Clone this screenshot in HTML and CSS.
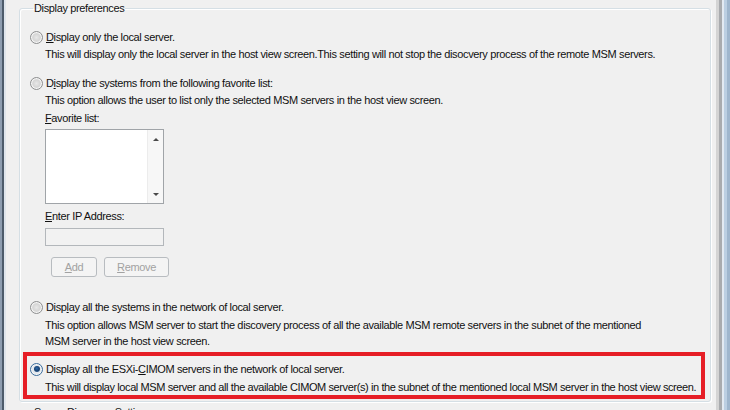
FILE: index.html
```html
<!DOCTYPE html>
<html>
<head>
<meta charset="utf-8">
<link rel="stylesheet" href="styles.css">
</head>
<body>
<div class="window">
  <div class="frame-left"><span class="fl1"></span><span class="fl2"></span><span class="fl3"></span></div>
  <div class="main">
    <fieldset class="group">
      <legend class="group-title">Display preferences</legend>

      <div class="opt opt-1"><span class="radio"></span><span class="opt-text"><u>D</u>isplay only the local server.</span></div>
      <div class="desc desc-1">This will display only the local server in the host view screen.This setting will not stop the disocvery process of the remote MSM servers.</div>

      <div class="opt opt-2"><span class="radio"></span><span class="opt-text">D<u>i</u>splay the systems from the following favorite list:</span></div>
      <div class="desc desc-2">This option allows the user to list only the selected MSM servers in the host view screen.</div>

      <div class="sub">
        <div class="field-label fav-label"><u>F</u>avorite list:</div>
        <div class="listbox">
          <div class="list-area"></div>
          <div class="vscroll"><span class="arrow-up"></span><span class="arrow-down"></span></div>
        </div>
        <div class="field-label ip-label"><u>E</u>nter IP Address:</div>
        <div class="textbox"></div>
        <div class="buttons">
          <div class="btn btn-add"><u>A</u>dd</div>
          <div class="btn btn-remove"><u>R</u>emove</div>
        </div>
      </div>

      <div class="opt opt-3"><span class="radio"></span><span class="opt-text">Disp<u>l</u>ay all the systems in the network of local server.</span></div>
      <div class="desc desc-3">This option allows MSM server to start the discovery process of all the available MSM remote servers in the subnet of the mentioned<br>MSM server in the host view screen.</div>

      <div class="highlight">
        <div class="opt opt-4"><span class="radio checked"></span><span class="opt-text">Display all the ESXi-<u>C</u>IMOM servers in the network of local server.</span></div>
        <div class="desc desc-4">This will display local MSM server and all the available CIMOM server(s) in the subnet of the mentioned local MSM server in the host view screen.</div>
      </div>
    </fieldset>

    <fieldset class="group group-2">
      <legend class="group-title">Server Discovery Settings</legend>
    </fieldset>
  </div>
  <div class="frame-right"><span class="fr1"></span><span class="fr2"></span><span class="fr3"></span><span class="fr4"></span><span class="fr5"></span></div>
</div>
</body>
</html>
```

FILE: styles.css
```css
html, body {
  margin: 0;
  padding: 0;
  width: 730px;
  height: 410px;
  overflow: hidden;
  background: #f0f0f0;
}

.window {
  display: flex;
  width: 730px;
  height: 410px;
  font-family: "Liberation Sans", Arial, sans-serif;
  font-size: 11px;
  letter-spacing: -0.36px;
  color: #111111;
}

.frame-left {
  display: flex;
  width: 6px;
  flex: none;
}
.frame-left span { display: block; height: 100%; }
.fl1 { width: 2px; background: #8e9db0; }
.fl2 { width: 2px; background: #4d5b6b; }
.fl3 { width: 2px; background: #dfe5ec; }

.frame-right {
  display: flex;
  width: 14px;
  flex: none;
}
.frame-right span { display: block; height: 100%; }
.fr1 { width: 3px; background: #d4d4d4; }
.fr2 { width: 3px; background: #a9abae; }
.fr3 { width: 2px; background: #e3eaf2; }
.fr4 { width: 3px; background: #bccfe2; }
.fr5 { width: 3px; background: #9fb6cd; }

.main {
  flex: 1;
  display: flex;
  flex-direction: column;
  min-width: 0;
}

.group {
  margin: 1px 5px 0 13px;
  padding: 14px 0 2px 10px;
  border: 1px solid #d5dfe5;
  border-radius: 3px;
  box-shadow: inset 1px 1px 0 #ffffff, 1px 1px 0 #ffffff;
  min-width: 0;
  flex: none;
}

.group-title {
  padding: 0 1px;
  margin-left: 3px;
  line-height: 14px;
  color: #111111;
}

.group-2 {
  margin-top: 3px;
  padding-top: 0;
  height: 20px;
}

.opt {
  display: flex;
  align-items: center;
  height: 16px;
  line-height: 16px;
  white-space: nowrap;
}

.radio {
  width: 11px;
  height: 11px;
  flex: none;
  border-radius: 50%;
  border: 1px solid #8d8e8f;
  background: radial-gradient(circle at 50% 50%, #e8e8e8 0, #d6d6d6 45%, #f3f3f3 100%);
  box-shadow: inset 0 0 0 1px #f6f6f6;
  margin-right: 3px;
  position: relative;
}

.radio.checked {
  border-color: #3a6c9c;
  background: radial-gradient(circle at 50% 50%, #e9eef3 0, #dfe5eb 60%, #f5f7f9 100%);
}
.radio.checked::after {
  content: "";
  position: absolute;
  left: 2.5px;
  top: 2.5px;
  width: 6px;
  height: 6px;
  border-radius: 50%;
  background: radial-gradient(circle at 45% 40%, #2c68a8 0, #173f6e 55%, #5a8fc4 100%);
}

.desc {
  padding-left: 15px;
  line-height: 16px;
  white-space: nowrap;
}

.desc-1 { margin-top: 1px; }
.opt-2 { margin-top: 13px; }
.desc-2 { margin-top: 1px; }

.sub {
  padding-left: 15px;
  display: flex;
  flex-direction: column;
  align-items: flex-start;
}

.field-label {
  line-height: 16px;
}
.fav-label { margin-top: 2px; }

.listbox {
  margin-top: 3px;
  width: 117px;
  height: 73px;
  border: 1px solid #a0a4a8;
  background: #ffffff;
  display: flex;
}
.list-area { flex: 1; }
.vscroll {
  width: 15px;
  flex: none;
  background: #f7f7f7;
  border-left: 1px solid #ececec;
  display: flex;
  flex-direction: column;
  justify-content: space-between;
  align-items: center;
  padding: 8px 0 7px;
}
.arrow-up, .arrow-down {
  width: 0;
  height: 0;
  border-left: 3px solid transparent;
  border-right: 3px solid transparent;
}
.arrow-up { border-bottom: 3px solid #4a4a4a; }
.arrow-down { border-top: 3px solid #4a4a4a; }

.ip-label { margin-top: 4px; }

.textbox {
  margin-top: 4px;
  width: 117px;
  height: 16px;
  border: 1px solid #b3b7bb;
  background: #f2f2f2;
}

.buttons {
  margin-top: 11px;
  margin-left: 6px;
  display: flex;
  gap: 7px;
}
.btn {
  height: 18px;
  line-height: 18px;
  border: 1px solid #b8bcc0;
  border-radius: 3px;
  background: #f4f4f4;
  color: #a2a2a2;
  text-align: center;
}
.btn-add { width: 44px; }
.btn-remove { width: 63px; }

.opt-3 { margin-top: 22px; }
.desc-3 { margin-top: 2px; }

.highlight {
  margin: 3px 5px 0 -7px;
  border: 4px solid #e61e26;
  padding: 5px 0 0 3px;
}
.desc-4 {
  margin-top: 2px;
  letter-spacing: -0.4px;
}
```
